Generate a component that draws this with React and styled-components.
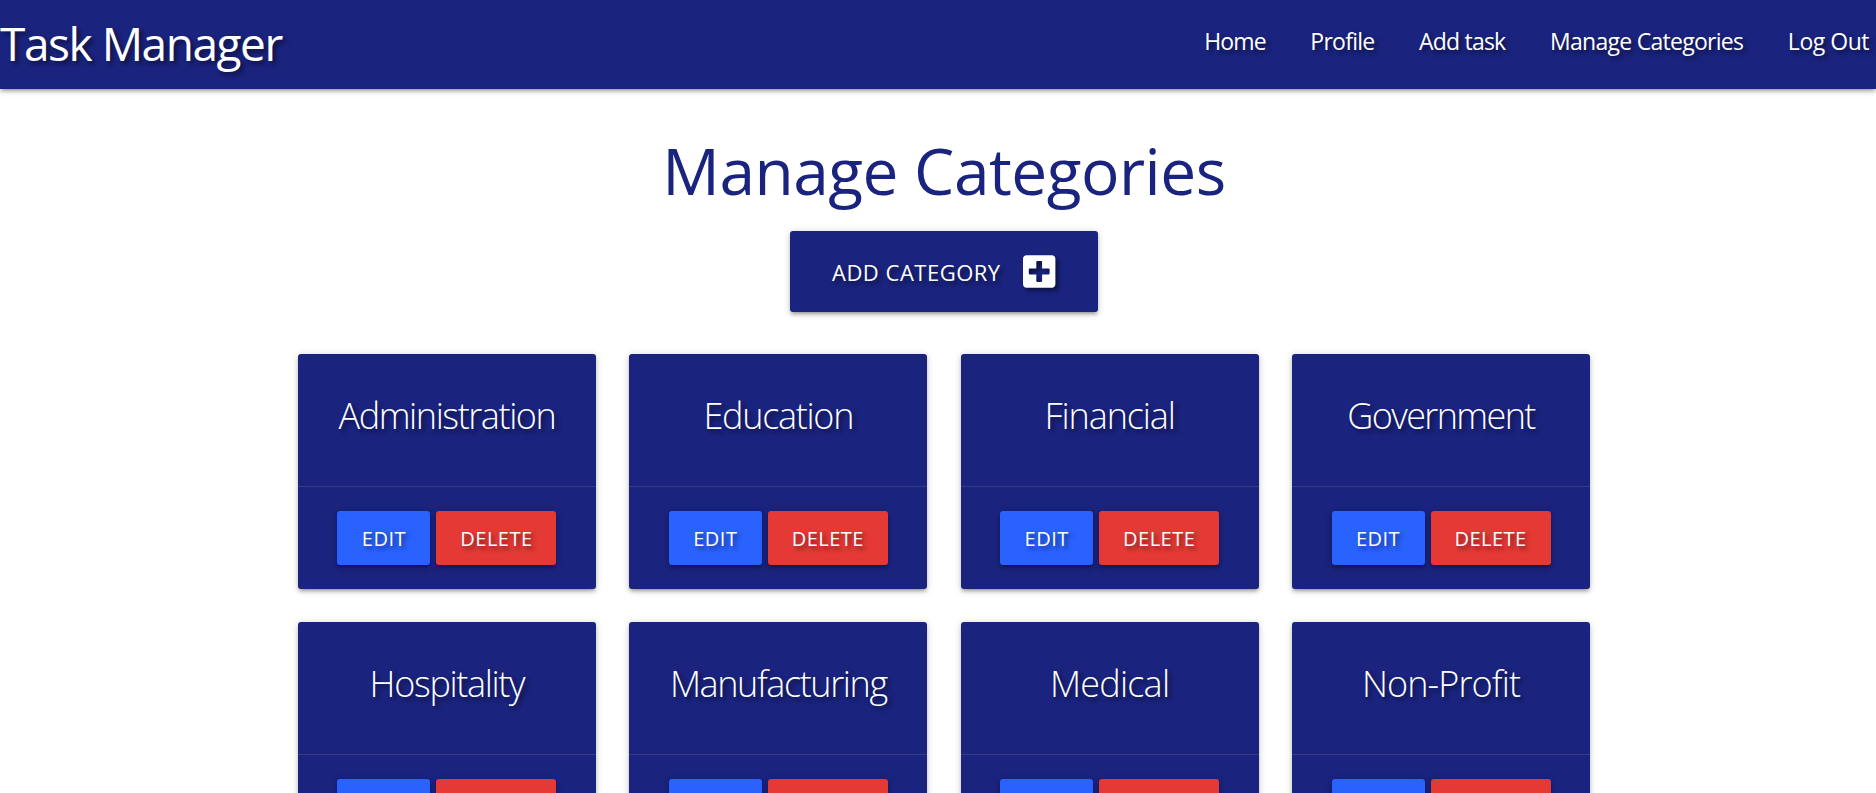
import React from "react";
import styled, { createGlobalStyle } from "styled-components";
import { FaPlusSquare } from "react-icons/fa";

const indigo = "#1a237e";
const blue = "#2962ff";
const red = "#e53935";
const depth =
  "0 3px 3px 0 rgba(0,0,0,.14), 0 4.5px 1.5px -3px rgba(0,0,0,.12), 0 1.5px 7.5px 0 rgba(0,0,0,.2)";
const textShadow = "3px 3px 4px rgba(0,0,0,.5)";

const GlobalStyle = createGlobalStyle`
  *, *::before, *::after { box-sizing: border-box; }
  html, body { margin: 0; background: #fff; }
  body {
    height: 100vh;
    overflow: hidden;
    font-family: "Segoe UI", "Open Sans", "Noto Sans", sans-serif;
  }
`;

const NavBar = styled.header`
  display: flex;
  justify-content: space-between;
  align-items: flex-start;
  height: 89px;
  background: ${indigo};
  color: #fff;
  box-shadow: ${depth};
  text-shadow: ${textShadow};
  white-space: nowrap;
`;

const Brand = styled.a`
  font-size: 46px;
  line-height: 86px;
  letter-spacing: -1.45px;
`;

const NavList = styled.ul`
  display: flex;
  gap: 44.6px;
  margin: 0;
  padding: 0 7px 0 0;
  list-style: none;
`;

const NavItem = styled.li`
  font-size: 23px;
  line-height: 82px;
  letter-spacing: ${(p) => p.$tracking}px;
`;

const Main = styled.main`
  display: flex;
  flex-direction: column;
  align-items: center;
  padding: 47px 0 0 12px;
`;

const Heading = styled.h1`
  margin: 0 0 25px;
  color: ${indigo};
  font-size: 64px;
  font-weight: 400;
  line-height: 70px;
  letter-spacing: -0.5px;
`;

const AddButton = styled.button`
  display: flex;
  align-items: flex-start;
  gap: 22.6px;
  width: 308px;
  height: 81px;
  margin: 0 0 42px;
  padding: 0 0 0 42px;
  border: 0;
  border-radius: 3px;
  background: ${indigo};
  color: #fff;
  box-shadow: ${depth};
  font-family: inherit;
  font-size: 22px;
  line-height: 83px;
  letter-spacing: 0.5px;
  text-transform: uppercase;
  text-shadow: ${textShadow};
  white-space: nowrap;
`;

const PlusIcon = styled(FaPlusSquare)`
  width: 32.4px;
  height: 37px;
  margin-top: 22px;
  filter: drop-shadow(3px 3px 2px rgba(0, 0, 0, 0.5));
`;

const CardGrid = styled.section`
  display: grid;
  grid-template-columns: repeat(4, 298px);
  gap: 33px 33.37px;
`;

const Card = styled.article`
  height: 235px;
  border-radius: 3px;
  background: ${indigo};
  color: #fff;
  box-shadow: ${depth};
  text-shadow: ${textShadow};
`;

const CardTitle = styled.h2`
  height: 132px;
  margin: 0;
  font-size: 36px;
  font-weight: 300;
  line-height: 124px;
  letter-spacing: ${(p) => p.$tracking}px;
  text-align: center;
  white-space: nowrap;
`;

const CardActions = styled.div`
  display: flex;
  justify-content: center;
  gap: 6px;
  padding: 24px 0;
  border-top: 1px solid rgba(160, 160, 160, 0.2);
`;

const ActionButton = styled.button`
  width: ${(p) => (p.$danger ? 120 : 93)}px;
  height: 54px;
  padding: 2px 0 0;
  border: 0;
  border-radius: 3px;
  background: ${(p) => (p.$danger ? red : blue)};
  color: #fff;
  box-shadow: ${depth};
  font-family: inherit;
  font-size: 20px;
  line-height: 52px;
  letter-spacing: 0.5px;
  text-transform: uppercase;
  text-shadow: ${textShadow};
`;

const links = [
  { label: "Home", tracking: -0.86 },
  { label: "Profile", tracking: -0.74 },
  { label: "Add task", tracking: -0.8 },
  { label: "Manage Categories", tracking: -0.72 },
  { label: "Log Out", tracking: -0.48 },
];

const categories = [
  { name: "Administration", tracking: -1.43 },
  { name: "Education", tracking: -1.3 },
  { name: "Financial", tracking: -1.1 },
  { name: "Government", tracking: -1.62 },
  { name: "Hospitality", tracking: -1.33 },
  { name: "Manufacturing", tracking: -1.4 },
  { name: "Medical", tracking: -0.8 },
  { name: "Non-Profit", tracking: -0.89 },
];

export default function App() {
  return (
    <>
      <GlobalStyle />
      <NavBar>
        <Brand>Task Manager</Brand>
        <NavList>
          {links.map((link) => (
            <NavItem key={link.label} $tracking={link.tracking}>
              {link.label}
            </NavItem>
          ))}
        </NavList>
      </NavBar>
      <Main>
        <Heading>Manage Categories</Heading>
        <AddButton>
          <span>Add Category</span>
          <PlusIcon />
        </AddButton>
        <CardGrid>
          {categories.map((category) => (
            <Card key={category.name}>
              <CardTitle $tracking={category.tracking}>{category.name}</CardTitle>
              <CardActions>
                <ActionButton>Edit</ActionButton>
                <ActionButton $danger>Delete</ActionButton>
              </CardActions>
            </Card>
          ))}
        </CardGrid>
      </Main>
    </>
  );
}
